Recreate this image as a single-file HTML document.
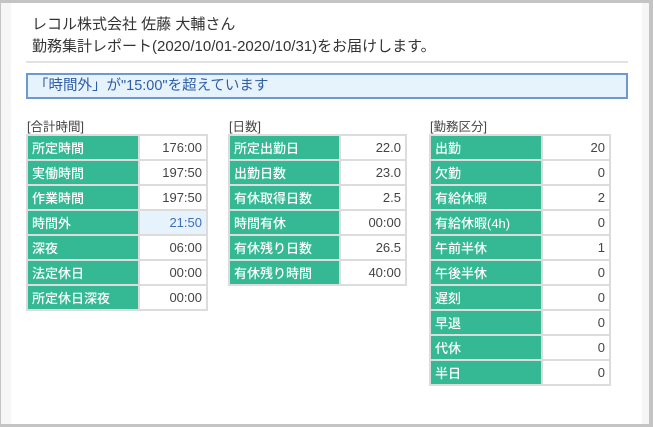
<!DOCTYPE html>
<html><head><meta charset="utf-8"><style>
*{margin:0;padding:0;box-sizing:border-box}
body{width:653px;height:427px;overflow:hidden;background:#fff;font-family:"Liberation Sans","Noto Sans CJK JP",sans-serif;position:relative}
.frame{position:absolute;left:0;top:0;width:653px;height:427px;border-top:3px solid #c4c4c4;border-left:1px solid #c4c4c4;border-right:4px solid #c4c4c4;border-bottom:3px solid #c4c4c4;background:#fff}
.ls{position:absolute;left:1px;top:3px;width:10px;height:421px;background:#f6f6f6}
.rs{position:absolute;left:642px;top:3px;width:7px;height:421px;background:#f6f6f6}
.t{position:absolute;left:32px;font-size:15px;color:#333;white-space:nowrap}
.sep{position:absolute;left:26px;top:61px;width:602px;height:2px;background:#e2e2e2}
.alert{position:absolute;left:26px;top:73px;width:602px;height:26px;background:#e6f2fc;border:2px solid #6e98d2;color:#2f5ea6;font-size:14.5px;line-height:22px;padding-left:6px}
.h{position:absolute;top:116px;font-size:12.5px;color:#444}
table{position:absolute;top:134px;border-collapse:collapse;font-size:13px}
td{height:25px;border:2px solid #dcdcdc;padding:0 4px}
td.l{background:#35b995;color:#fff;font-weight:500}
td.v{text-align:right;color:#444;background:#fff}
td.b{background:#e6f2fc;color:#3f6fb8}
</style></head><body>
<div class="frame"></div><div class="ls"></div><div class="rs"></div>
<div class="t" style="top:13px">レコル株式会社 佐藤 大輔さん</div>
<div class="t" style="top:35px">勤務集計レポート(2020/10/01-2020/10/31)をお届けします。</div>
<div class="sep"></div>
<div class="alert">「時間外」が"15:00"を超えています</div>
<div class="h" style="left:27px">[合計時間]</div>
<div class="h" style="left:229px">[日数]</div>
<div class="h" style="left:430px">[勤務区分]</div>
<table style="left:26px;width:182px">
<col style="width:112px"><col>
<tr><td class="l">所定時間</td><td class="v">176:00</td></tr>
<tr><td class="l">実働時間</td><td class="v">197:50</td></tr>
<tr><td class="l">作業時間</td><td class="v">197:50</td></tr>
<tr><td class="l">時間外</td><td class="v b">21:50</td></tr>
<tr><td class="l">深夜</td><td class="v">06:00</td></tr>
<tr><td class="l">法定休日</td><td class="v">00:00</td></tr>
<tr><td class="l">所定休日深夜</td><td class="v">00:00</td></tr>
</table>
<table style="left:228px;width:179px">
<col style="width:111px"><col>
<tr><td class="l">所定出勤日</td><td class="v">22.0</td></tr>
<tr><td class="l">出勤日数</td><td class="v">23.0</td></tr>
<tr><td class="l">有休取得日数</td><td class="v">2.5</td></tr>
<tr><td class="l">時間有休</td><td class="v">00:00</td></tr>
<tr><td class="l">有休残り日数</td><td class="v">26.5</td></tr>
<tr><td class="l">有休残り時間</td><td class="v">40:00</td></tr>
</table>
<table style="left:429px;width:182px">
<col style="width:112px"><col>
<tr><td class="l">出勤</td><td class="v">20</td></tr>
<tr><td class="l">欠勤</td><td class="v">0</td></tr>
<tr><td class="l">有給休暇</td><td class="v">2</td></tr>
<tr><td class="l">有給休暇(4h)</td><td class="v">0</td></tr>
<tr><td class="l">午前半休</td><td class="v">1</td></tr>
<tr><td class="l">午後半休</td><td class="v">0</td></tr>
<tr><td class="l">遅刻</td><td class="v">0</td></tr>
<tr><td class="l">早退</td><td class="v">0</td></tr>
<tr><td class="l">代休</td><td class="v">0</td></tr>
<tr><td class="l">半日</td><td class="v">0</td></tr>
</table>
</body></html>
